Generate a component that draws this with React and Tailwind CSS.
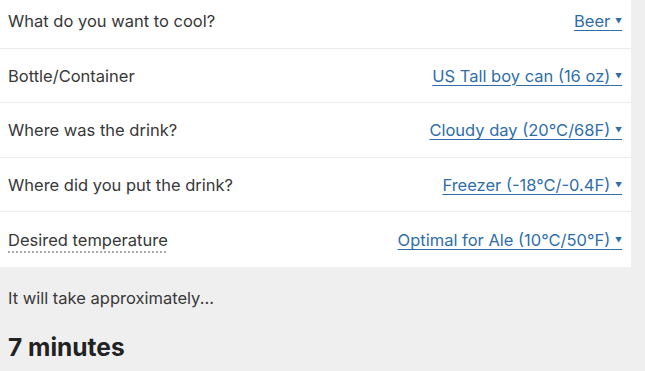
import React from 'react';

const rows = [
  { label: 'What do you want to cool?', value: 'Beer' },
  { label: 'Bottle/Container', value: 'US Tall boy can (16 oz)' },
  { label: 'Where was the drink?', value: 'Cloudy day (20°C/68F)' },
  { label: 'Where did you put the drink?', value: 'Freezer (-18°C/-0.4F)' },
  { label: 'Desired temperature', value: 'Optimal for Ale (10°C/50°F)', abbr: true },
];

export default function App() {
  return (
    <div
      className="w-[645px] h-[371px] overflow-hidden bg-[#efefef] text-[#383838]"
      style={{ fontFamily: 'Inter, "Liberation Sans", Arial, sans-serif' }}
    >
      <div className="w-[631px] bg-white -mt-[6px]">
        {rows.map((r, i) => (
          <div
            key={r.label}
            className={
              'flex items-center justify-between h-[54.5px] pl-2 pr-[9px] pt-[2px] ' +
              (i < rows.length - 1 ? 'border-b border-[#ececec]' : '')
            }
          >
            <span
              className={
                'text-[16.5px] ' +
                (r.abbr ? 'underline decoration-dotted decoration-[#999] underline-offset-[6px]' : '')
              }
            >
              {r.label}
            </span>
            <a href="#" className="text-[16.5px] text-[#2f6eaa] underline underline-offset-[3px]">
              {r.value} <span className="text-[7px] align-middle">▼</span>
            </a>
          </div>
        ))}
      </div>
      <div className="pl-2 pt-[19px] text-[16.5px]">It will take approximately...</div>
      <div className="pl-2 pt-[19px] text-[24.5px] font-bold text-[#222]">7 minutes</div>
    </div>
  );
}
